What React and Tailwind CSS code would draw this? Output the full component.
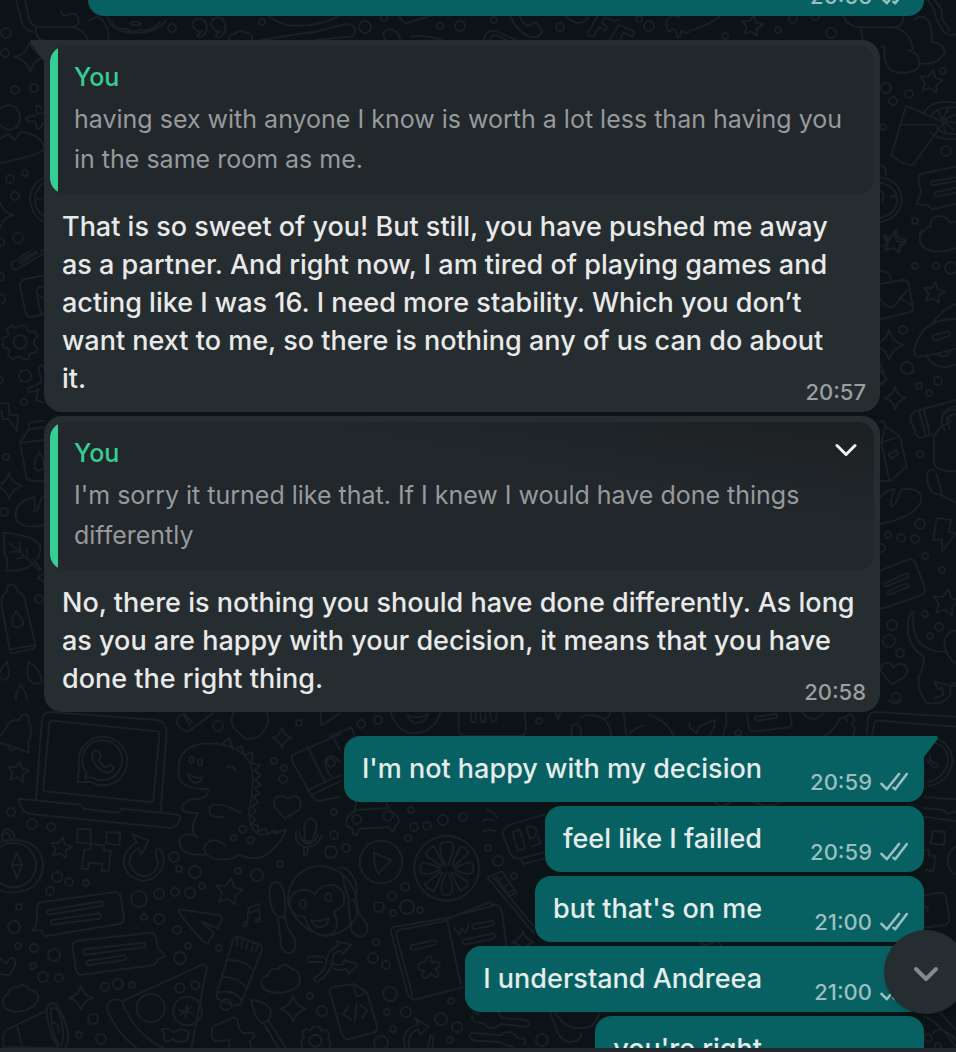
import { clsx } from "clsx";

const FONT = "font-[Inter,'Noto_Sans',sans-serif]";

const INCOMING = [
  {
    id: "in-1",
    quote: "having sex with anyone I know is worth a lot less than having you in the same room as me.",
    text: "That is so sweet of you! But still, you have pushed me away as a partner. And right now, I am tired of playing games and acting like I was 16. I need more stability. Which you don’t want next to me, so there is nothing any of us can do about it.",
    time: "20:57",
    tail: true,
  },
  {
    id: "in-2",
    quote: "I'm sorry it turned like that. If I knew I would have done things differently",
    text: "No, there is nothing you should have done differently. As long as you are happy with your decision, it means that you have done the right thing.",
    time: "20:58",
    menu: true,
  },
];

const OUTGOING = [
  { id: "out-1", text: "I'm not happy with my decision", time: "20:59", tail: true },
  { id: "out-2", text: "feel like I failled", time: "20:59" },
  { id: "out-3", text: "but that's on me", time: "21:00" },
  { id: "out-4", text: "I understand Andreea", time: "21:00" },
  { id: "out-5", text: "you're right", time: "21:00" },
];

// Small circles scattered between the doodles: [x, y, r]
const DOTS = [
  [6, 33, 5], [5, 53, 4], [15, 90, 4], [34, 88, 4], [10, 179, 4], [25, 173, 3], [15, 196, 4], [18, 238, 5],
  [0, 242, 4], [0, 277, 4], [0, 299, 5], [25, 376, 6], [24, 402, 3], [0, 380, 3], [6, 457, 3], [4, 512, 4], [39, 599, 4],
  [172, 28, 4], [262, 22, 3], [365, 27, 6], [384, 18, 3], [440, 26, 3], [460, 26, 5], [494, 20, 3], [560, 27, 4],
  [639, 19, 3], [649, 26, 5], [725, 36, 3], [778, 30, 3], [793, 19, 4], [815, 16, 4], [831, 33, 5],
  [886, 88, 5], [909, 94, 4], [893, 101, 4], [943, 71, 3], [883, 127, 3], [946, 151, 5], [915, 221, 3],
  [915, 266, 3], [936, 266, 3], [951, 268, 6], [903, 330, 4], [907, 368, 6], [938, 381, 4], [919, 386, 3], [929, 393, 3],
  [920, 454, 3], [920, 524, 5], [915, 539, 4], [901, 538, 4], [888, 535, 3], [881, 548, 4], [925, 556, 3], [942, 570, 3],
  [892, 625, 5], [889, 641, 6], [900, 653, 4], [930, 636, 3], [939, 627, 4], [925, 614, 3], [896, 697, 4],
  [11, 812, 4], [32, 824, 5], [51, 827, 4], [57, 877, 5], [69, 882, 4], [86, 883, 3], [50, 891, 4], [19, 907, 3],
  [14, 927, 6], [18, 946, 3], [34, 948, 4], [54, 955, 6], [33, 966, 3], [43, 977, 5], [59, 978, 4], [105, 987, 4],
  [118, 984, 5], [132, 985, 3], [93, 1019, 5], [79, 1035, 3], [101, 1039, 5], [139, 899, 8], [159, 894, 5],
  [175, 892, 4], [190, 893, 5], [202, 886, 3], [144, 917, 3], [159, 919, 5], [177, 930, 4], [188, 946, 3],
  [180, 958, 6], [219, 948, 3], [174, 857, 5], [179, 869, 3], [195, 872, 6], [238, 871, 3], [257, 875, 6],
  [280, 864, 3], [218, 726, 5], [299, 723, 3], [274, 761, 3], [284, 768, 3], [283, 779, 4], [331, 852, 6],
  [334, 835, 4], [334, 812, 3], [361, 724, 4], [378, 720, 4], [411, 810, 3], [414, 827, 4], [427, 826, 4],
  [443, 820, 5], [463, 817, 4], [408, 838, 3], [346, 848, 4], [405, 887, 4], [392, 896, 4], [379, 907, 5],
  [393, 913, 3], [407, 907, 7], [420, 910, 3], [376, 942, 3], [373, 958, 5], [386, 965, 4], [310, 996, 3],
  [322, 1011, 5], [390, 994, 7], [387, 1012, 3], [406, 1012, 5], [451, 1001, 3], [441, 1019, 6], [457, 1027, 5],
  [393, 1029, 3], [450, 1040, 3], [381, 1043, 7], [542, 1040, 6], [498, 861, 5], [488, 848, 3], [514, 876, 3],
  [539, 721, 3], [738, 733, 3], [928, 1038, 4], [938, 1046, 3],
];

const STARS = [
  [752, 26, 11], [931, 82, 12], [894, 242, 12], [934, 293, 11], [946, 603, 14], [18, 772, 11], [61, 848, 11],
  [229, 892, 14],
];

const SPARKLES = [
  [30, 57, 15], [0, 215, 13], [9, 486, 13], [889, 345, 15], [895, 398, 11], [282, 738, 10], [81, 998, 12],
  [293, 1009, 13], [558, 705, 14], [523, 942, 11],
];

// Wallpaper groups: origin x, origin y, and paths drawn at three times their final size
const DOODLES = [
  {
    x: 0,
    y: 0,
    d: [
      "M48 0 L66 70 Q74 88 98 96 M75 0 L88 60 Q96 80 120 80 L215 82 Q245 78 232 48 Q222 34 200 46 Q182 50 184 30 M106 82 Q108 120 132 122 L225 122 M215 82 Q262 92 262 122",
      "M268 62 Q296 40 312 66 Q328 90 326 120",
      "M322 52 Q336 96 400 98 Q470 100 498 62 M336 62 Q350 96 376 84 Q398 104 420 88 Q452 100 480 66 M390 70 Q406 60 424 72 Q406 82 390 70",
      "M606 94 Q582 110 598 112 Q628 102 618 70 Q610 52 588 58 Q568 70 584 88 Q596 98 606 94 M662 94 Q638 110 654 112 Q684 102 674 70 Q664 44 642 56 Q626 68 640 86 Q650 98 662 94",
      "M688 120 Q684 104 704 102 Q716 88 738 98 Q760 100 756 120 M806 48 Q860 94 960 68 M784 120 L960 92",
      "M26 316 Q-4 318 -10 350 Q-6 380 24 390 Q54 392 60 356 Q58 318 26 316",
      "M108 318 L112 342 L132 340 M108 318 Q120 312 124 330 M106 348 Q84 346 78 358 Q86 370 106 362 M108 370 L112 388 Q124 388 128 368",
      "M-4 418 L26 402 L44 420 L62 396 Q126 402 134 448 Q100 470 -4 490",
      "M134 532 Q96 546 90 594 Q92 646 134 668 M134 548 Q108 560 104 598 Q108 636 134 650 M110 596 L124 600",
    ],
  },
  {
    x: 640,
    y: 0,
    d: [
      "M76 72 Q90 36 120 52 M80 72 Q80 96 90 96 Q98 78 108 96 L112 112 Q122 114 124 92 Q142 104 152 92 Q212 74 240 48",
      "M612 50 Q618 76 660 82 L760 82 Q790 80 790 50 M662 84 L668 120 M760 82 Q814 94 818 148 M724 140 L734 140 Q728 200 760 214 Q800 226 834 206 Q850 160 802 150 M822 60 Q842 40 864 60 Q876 74 876 126 Q916 132 914 160 Q890 198 840 190",
      "M862 0 Q884 22 890 60 L912 96 Q930 112 948 102 M884 0 Q912 30 904 52 L930 92",
      "M798 318 L912 366 M780 374 L890 374 M798 318 L754 466 Q786 494 818 496 L912 366",
      "M948 308 Q876 296 852 338 M948 418 Q894 420 870 396 M948 322 Q888 318 872 350 M948 402 Q906 404 890 382 M906 362 L926 324 M908 362 L948 342 M908 362 L948 368 M908 362 L942 390 M908 362 L916 398 M908 362 L894 330",
      "M720 496 Q742 500 738 526 M720 532 Q780 540 786 600 Q780 656 720 666 M720 548 Q770 558 772 602 Q766 646 720 654 M722 574 Q736 578 728 604 M752 590 L766 588",
      "M948 500 L850 520 Q832 524 836 546 L844 576 L830 612 L864 616 L876 628 L948 612 M948 532 L876 544 Q864 554 880 556 L948 544 M948 564 L888 576 Q876 586 892 590 L948 578",
      "M870 750 Q834 744 840 706 Q864 676 870 680 Q872 646 906 648 Q926 656 930 668 L948 664",
      "M736 702 L746 724 L764 694 L770 724 L796 728 L778 746 L782 750 M736 702 L740 730 L728 740",
    ],
  },
  {
    x: 870,
    y: 230,
    d: [
      "M154 0 Q138 40 174 60 Q220 72 258 52",
      "M30 124 Q58 120 64 148 M30 162 L100 150 Q114 150 116 162 L130 238 Q130 244 122 246 L30 268 M30 206 Q58 244 74 226 L112 180 M90 204 L128 228",
      "M184 284 Q214 240 258 222 M258 266 Q176 268 150 316 Q118 376 146 380 Q200 374 258 356 M190 326 Q182 318 196 314 L234 304 Q246 308 236 318 L202 330 Q192 332 190 326 M172 380 Q186 410 226 412 L258 404 M202 370 Q210 382 228 378 Q238 372 238 362",
      "M30 400 L50 448 L36 462 L30 458",
      "M258 510 L136 544 Q116 552 124 576 L136 600 M146 544 L164 600 M160 538 L178 598 M258 528 Q214 536 214 576 L224 600 M258 552 Q234 554 232 576 L240 596",
    ],
  },
  {
    x: 640,
    y: 370,
    d: [
      "M720 0 L740 28 L720 44 M784 0 Q800 20 822 4",
      "M948 90 L826 124 Q808 132 812 152 L828 194 Q836 206 856 200 L880 192 M838 122 L856 196 M852 118 L868 192 M948 118 Q906 120 906 154 M948 132 Q920 134 920 150 M936 154 Q890 170 882 204 L882 280 Q890 304 948 304",
      "M720 156 Q734 146 736 170 L780 198 L800 290 L750 334 L720 332 M724 218 L776 200 M724 218 L748 332 M724 218 L736 170 M746 252 L770 240 L776 252 L752 266 Z",
      "M864 304 Q856 330 870 356 Q876 372 900 374 L948 398 M864 304 Q870 298 882 300 M890 312 L906 372",
      "M720 382 Q740 358 764 358 Q748 400 754 410 Q764 414 784 358 Q848 350 844 392 Q826 442 720 462",
      "M890 444 L934 450 L926 486 L948 490 L906 544 L906 508 L880 510 Z",
      "M720 602 L806 568 Q820 566 826 578 L854 652 Q858 668 844 676 L728 716 L720 714 M734 640 L798 610 Q810 612 804 622 L742 648 Q728 650 734 640 M744 664 L798 640 Q810 644 802 652 L750 674 Q738 674 744 664",
      "M822 726 Q800 730 804 790 Q810 830 852 862 Q850 900 836 920 Q830 960 860 998 Q910 1010 932 972 Q926 940 948 938 M822 726 Q812 780 840 820 Q870 846 916 846 M948 780 Q908 790 914 830 Q926 870 948 880 M884 936 L894 958 L906 950 L910 976 L884 984 M884 936 L948 950",
      "M756 944 L722 904 Q718 880 740 878 Q756 882 760 892 Q778 874 796 886 Q808 904 794 920 Z",
    ],
  },
  {
    x: 0,
    y: 250,
    d: [
      "M132 0 L122 2 M46 60 Q28 52 38 36 L96 0 M46 60 L132 10 M56 34 L108 4 M62 40 L112 8",
      "M132 76 L72 88 Q58 94 60 110 L78 192 Q84 204 100 200 L132 192 M110 118 Q110 152 126 196 M110 118 Q120 106 132 110 M116 136 L132 146",
      "M8 264 L22 260 L26 250 L20 240 L34 226 L46 234 L54 232 L60 226 L78 228 L82 240 L92 246 L106 244 L112 262 L102 272 L102 284 L114 296 L106 308 L94 308 L88 316 L88 326 L70 328 L60 320 L50 322 L38 328 L24 316 L28 302 L22 294 L10 292 Z",
      "M60 256 A20 20 0 1 0 61 256",
      "M132 352 L122 346 L116 352 L124 398 L82 416 L86 426 L108 424 L116 416 L108 450 L132 458",
      "M-4 462 L26 458 L28 494 L54 496 L50 544 L26 508 L8 508 L4 482",
      "M132 512 L92 516 Q84 520 88 536 L60 578 L80 684 Q84 692 96 692 L132 694 M64 578 L132 570 M90 538 L132 532 M118 608 Q100 634 104 654 Q116 668 130 656 Q136 634 118 608",
      "M132 826 Q50 840 46 796 Q48 752 104 742 Q106 780 102 784 Q112 792 124 744 L132 742",
      "M10 848 Q96 854 120 886 Q128 914 96 944 Q66 966 18 962 Q26 930 14 910 Z M30 880 L106 948 L118 962 L124 958 L100 928 M58 876 L62 904 L34 906 M80 900 L82 920 L50 926",
      "M22 1016 Q20 1004 36 1004 Q50 1006 52 1024 Q70 1030 74 1048 L106 1184 Q108 1194 94 1198 L40 1210 Q28 1210 28 1194 L4 1060 Q4 1036 22 1024 Z M28 1198 L104 1186 M48 1084 Q34 1106 38 1126 Q54 1140 70 1122 Q70 1106 48 1084",
      "M22 1236 Q-4 1256 -2 1282 Q14 1300 28 1276 Z M86 1236 Q76 1270 88 1290 Q104 1310 126 1296 Q124 1260 86 1236 M62 1304 Q44 1332 48 1350 M62 1304 Q80 1328 80 1350",
      "M132 970 L112 984 L132 996",
    ],
  },
  {
    x: 0,
    y: 700,
    d: [
      // bell
      "M0 106 Q14 98 22 76 Q30 58 58 60 Q62 42 78 44 Q92 52 86 66 Q98 84 90 112 Q80 136 88 158 L0 128 M24 140 Q32 158 46 146",
      // laptop
      "M108 298 L126 56 Q130 36 152 36 L470 60 Q500 66 500 96 L482 338 M134 274 Q128 272 130 262 L148 70 Q150 62 158 62 L470 94 Q480 96 478 106 L460 298 Q458 308 448 306 Z M56 296 L240 314 Q244 314 250 326 L350 338 Q360 338 364 326 L536 344 Q544 348 540 358 Q530 384 510 384 L90 342 Q62 336 56 296",
      "M238 200 A73 73 0 1 1 272 246 L232 246 Z M250 200 A60 60 0 1 1 276 232 L254 234 L260 220 Z",
      "M286 150 Q300 152 302 172 L296 180 Q304 196 318 202 L330 194 Q340 198 340 208 Q326 224 306 212 Q278 194 276 166 Q278 152 286 150",
      // dinosaur
      "M626 268 Q552 268 538 236 Q524 152 590 134 Q700 118 746 182 Q770 220 748 330 Q744 390 780 404 Q830 400 858 388 Q850 424 806 460 Q760 488 718 464 Q690 484 644 476 Q606 464 614 438 Q636 404 676 436 M626 268 Q624 300 572 298 Q538 314 548 330 Q560 342 596 338 Q574 370 580 398 L592 412 Q554 390 538 420 Q536 470 614 464 M564 220 Q588 238 608 232 Q600 250 584 248 Q566 240 564 220 M682 202 Q694 192 708 212 M722 338 Q650 300 630 320 Q620 356 670 350",
      "M570 180 A6 6 0 1 0 580 180 A6 6 0 1 0 570 180 M595 188 A6 6 0 1 0 605 188 A6 6 0 1 0 595 188 M718 388 A11 11 0 1 0 740 388 A11 11 0 1 0 718 388 M692 414 A8 8 0 1 0 708 414 A8 8 0 1 0 692 414 M742 420 A10 10 0 1 0 762 420 A10 10 0 1 0 742 420",
      "M660 136 L688 114 L698 148 L724 138 L732 166 L758 158 L756 190 L780 196 L764 212 L782 226 L766 238 L782 254 L764 266 L778 280 L760 292 L776 308 L756 318 L768 334 L752 346 L768 360 L752 370 L776 378 L772 396 L796 386 L804 402 L826 390 L832 402",
      // pixel face, arrow and compass
      "M234 386 L272 388 L272 432 L230 426 Z M320 396 L360 398 L358 436 L318 430 Z M272 432 L312 436 L312 450 L332 454 L326 514 L304 512 L308 492 L266 488 L264 508 L246 506 L252 450 L272 448 Z",
      "M398 402 L446 422 L424 464 L416 444 Q388 462 388 488 Q398 524 430 528 Q470 526 474 486 L466 460 Q468 442 484 450 Q498 480 484 510 Q460 544 426 542 Q376 532 370 486 Q374 446 410 428 Z",
      "M-2 571 Q22 580 50 576 Q122 570 130 498 Q124 426 50 420 Q20 418 0 426 M0 442 A67 67 0 1 1 0 548 M50 458 L66 494 L50 536 L36 494 Z M38 494 L66 494 M4 406 Q10 386 26 388 Q44 396 44 418 M18 400 A12 12 0 1 0 19 400",
      // text bubbles
      "M110 628 Q110 610 126 606 L346 576 Q360 576 362 590 L372 654 Q372 668 358 672 L140 708 Q128 708 124 690 L98 692 Q116 670 110 628 M146 630 L306 604 Q316 612 306 618 L146 644 Q136 638 146 630 M156 660 L298 640 Q310 648 298 656 L156 674 Q148 668 156 660",
      "M218 740 Q218 726 232 722 L452 698 Q464 698 468 712 L474 746 L496 768 L472 778 Q472 792 458 796 L244 824 Q230 824 228 810 Z M254 748 L432 728 Q440 736 432 742 L256 764 Q246 756 254 748 M262 782 L374 766 Q384 774 374 780 L264 796 Q254 788 262 782",
      "M0 776 L20 790 Q26 772 40 774 Q52 786 40 806 L28 826 L0 822",
      "M12 920 Q2 890 24 882 Q28 860 52 862 Q70 844 88 870 Q110 870 116 890 Q112 914 88 926 Q34 948 12 920",
      "M140 932 L22 988 Q2 1004 12 1034 M52 982 L68 1044 M8 1040 L176 1044 M140 932 Q140 910 160 910 Q186 920 204 1000 Q206 1030 196 1044 M140 932 Q144 1000 176 1044 M154 926 Q180 910 190 1000 Q188 1050 174 1030 Q150 990 154 926 M160 968 Q180 970 176 1000",
      // cup, ticket, paper plane, notes
      "M532 72 Q528 48 552 40 L576 68 M532 72 Q548 96 566 94 L638 40 M552 46 L570 78 M700 38 Q684 78 716 96 Q744 134 782 104 Q816 70 800 38 M962 36 L964 76 L1020 40",
      "M1020 102 L880 164 Q870 172 880 190 L936 290 Q946 304 960 302 L1020 290 M922 272 L1020 226 M932 286 L1020 244 M922 140 L976 246 M998 110 L1020 150 M976 188 Q976 168 998 168 L1020 186 M994 230 Q974 206 976 188 M992 176 A12 12 0 1 0 993 176",
      "M854 356 L824 320 Q816 298 832 290 Q850 284 862 296 Q880 282 896 294 Q910 312 896 330 Z",
      "M914 400 Q908 366 930 354 Q952 360 950 384 L942 410 Q930 434 914 420 Z M888 394 Q884 434 920 442 Q954 440 964 408 M898 394 Q902 428 924 432 Q946 426 954 404 M912 442 L912 466 L920 466 L924 442",
      "M536 628 L660 646 Q670 650 666 658 L652 686 L604 664 L642 700 L626 726 Q620 732 610 724 Q540 650 536 628",
      "M742 664 L746 624 L776 612 L780 654 M748 640 L776 628 M742 664 Q728 666 730 678 Q744 682 742 664 M780 654 Q764 656 768 666 Q782 668 780 654",
      // tube, pizza, cloud, brush
      "M700 718 Q706 708 718 710 L778 734 Q788 740 786 750 L726 904 Q716 920 700 916 L656 898 Q646 888 652 874 Z M712 716 L710 736 M728 720 L724 744 M744 726 L738 750 M760 732 L754 754 M774 738 L766 756 M688 780 Q730 780 756 806 M670 830 Q716 832 738 862 M656 876 Q704 868 724 900 M676 898 A16 16 0 1 0 680 898",
      "M366 904 L606 794 Q620 792 620 806 L574 1044 M366 904 Q352 892 330 904 Q316 916 324 934 Q350 1000 410 1044 M366 904 Q400 1000 490 1044 M410 924 A42 42 0 1 0 494 924 A42 42 0 1 0 410 924 M562 890 A43 43 0 1 0 563 890 M560 916 L556 950 M536 930 L576 940 M540 946 L572 922 M526 864 A14 14 0 1 0 554 864 A14 14 0 1 0 526 864 M574 856 A12 12 0 1 0 598 856 A12 12 0 1 0 574 856 M484 990 Q506 980 520 998 Q540 982 564 994 Q570 1010 556 1024 Q530 1030 518 1016 Q500 1032 490 1016 Q500 1004 484 990",
      "M790 866 Q772 838 804 826 Q810 802 834 808 Q852 780 876 808 Q896 808 896 830 Q910 850 880 868 Q830 890 790 866",
      "M754 900 Q800 904 812 930 Q816 960 790 970 Q764 960 754 900 M790 970 L836 1044 M806 964 L858 1044 M798 980 L812 1002",
      "M636 994 Q632 982 650 974 L690 958 Q706 946 714 962 Q714 988 730 1000 L760 998 Q770 1008 750 1022 Q750 1030 754 1044 M636 994 Q632 1018 650 1024 L684 1020 Q692 1030 688 1044",
      "M902 1024 L912 1014 L906 996 L920 986 L932 992 L938 980 L958 980 L964 992 L978 990 L990 1004 L984 1016 L992 1026 L988 1044 M902 1024 L908 1044 M946 1004 A18 18 0 1 0 947 1004",
    ],
  },
  {
    x: 190,
    y: 700,
    d: [
      // monkey
      "M294 610 Q290 540 350 506 Q420 480 476 542 Q510 590 500 650 Q470 700 410 708 Q330 696 294 610 M298 610 Q306 566 346 570 Q366 572 374 584 Q398 546 440 558 Q472 580 460 616 Q444 630 432 636 Q456 690 416 706 Q360 712 344 650 Q304 650 298 610 M364 660 Q386 670 416 654 Q416 680 388 682 Q366 678 364 660 M330 612 A9 13 0 1 0 348 612 A9 13 0 1 0 330 612 M406 592 A9 13 0 1 0 424 592 A9 13 0 1 0 406 592",
      "M264 652 Q232 620 240 560 Q254 532 276 560 Q290 600 284 650 Z M264 654 L274 740 Q282 764 304 758 Q324 744 314 716 Q292 690 284 650 M446 504 Q470 492 494 540 Q510 580 490 602 M456 516 Q466 580 482 606 M474 606 L484 690 Q496 714 520 708 Q540 694 530 672 Q504 640 490 598",
      // crossing arrows
      "M352 776 Q354 766 400 770 L406 776 M354 786 L396 786 M372 836 Q410 810 410 778 Q414 748 444 738 L440 724 L484 734 L458 762 L450 752 Q426 760 428 780 Q424 820 384 844 Q372 846 372 836 M430 790 Q440 800 462 790 L462 780 L504 794 L476 822 L470 808 Q440 814 430 804",
      // code file
      "M420 878 Q414 866 434 860 L490 852 L530 876 L562 980 Q564 992 552 998 L474 1018 Q462 1018 456 1004 Z M490 852 L498 884 Q500 890 510 888 L530 876 M476 922 L458 942 L484 960 M500 910 L494 966 M512 916 L532 932 L516 954",
      // car
      "M470 378 Q464 348 492 336 L500 304 M492 330 L592 324 M588 304 L600 332 Q630 346 626 368 L616 378 L612 394 Q604 396 598 382 L508 386 L500 406 L490 404 L488 386 L470 378 M486 358 A14 14 0 1 0 514 358 A14 14 0 1 0 486 358 M580 348 A14 14 0 1 0 608 348 A14 14 0 1 0 580 348",
      // play and citrus
      "M572 422 A64 64 0 1 0 574 422 M552 458 L604 480 L566 520 Q550 500 552 458",
      "M769 408 A97 97 0 1 0 771 408",
      "M766 496 Q738 434 760 426 L784 426 Q800 440 774 496 M786 496 L810 440 Q826 438 836 458 L790 500 M796 504 Q840 480 850 492 L850 514 Q840 530 796 510 M790 516 L836 548 Q828 570 810 572 L784 518 M776 520 Q798 576 776 586 L762 584 Q744 570 768 520 M758 518 L732 574 Q710 566 704 552 L752 516 M750 510 Q704 530 692 516 L692 494 Q706 482 750 504 M754 498 L708 466 Q710 446 732 440 L760 494",
      // open book
      "M770 654 L608 682 Q600 684 604 700 L652 880 Q660 900 680 898 L818 862 M770 654 L812 852 M770 658 L900 606 L904 614 Q930 610 936 636 L950 738 M770 654 L914 616 M770 662 L626 690 Q616 696 620 710 L668 888 M664 736 L734 720 Q744 728 734 734 L670 750 Q658 744 664 736 M794 684 L808 704 L814 684 L828 698 L836 672 M848 674 L908 662 Q918 670 908 676 L852 688 Q844 680 848 674 M820 720 L910 700 Q922 708 910 716 L824 734 Q812 728 820 720",
      "M706 786 Q708 766 720 770 Q728 776 724 788 Q746 782 750 794 Q746 806 736 806 Q750 822 742 830 Q730 832 722 820 Q710 840 698 832 Q694 822 702 812 Q680 812 684 796 Q692 784 706 786",
      // clock, brush and rays
      "M1062 344 L960 374 Q936 384 940 408 L962 464 Q974 480 996 474 L1062 458 M992 476 L1000 492 L1062 476 M968 396 L988 388 L998 414 M968 396 L974 420 M976 430 L984 452 L1006 446 L1000 424 M1010 382 Q1036 374 1040 394 Q1036 418 1018 414 L1010 382 M1044 410 L1052 430 L1026 440 M890 328 L910 338 L924 354 M878 366 Q880 354 912 362 M878 396 Q890 386 918 392",
      "M892 532 L936 514 L980 578 L958 588 L920 532 M892 532 L1032 700 M908 530 L1032 680 M936 534 L926 540 M954 552 L944 560 M970 572 L958 576",
      // refresh, wrench
      "M646 1044 Q630 988 684 974 L676 956 L716 980 L690 1004 L684 988 Q650 1000 658 1044 M714 1044 L722 1006 L730 1012 L728 1044 M636 688",
      "M848 948 Q842 958 856 966 L882 970 Q896 990 916 982 L932 972 L1004 980 Q1018 980 1018 970 Q1016 960 1002 960 L936 954 L924 936 M850 936 L870 944 M840 1006 Q840 1020 856 1022 L932 1026 Q950 1040 972 1040 M844 998 L932 1006 Q950 990 970 1000 L982 1014 L1000 1016 Q1012 1024 1002 1034",
      "M1080 938 L1104 1000 Q1120 1028 1146 1026 Q1176 1020 1174 1000 M1096 938 Q1130 1000 1200 980 Q1220 970 1228 940",
      // strip below the second message
      "M602 36 Q620 96 672 100 Q734 96 752 36 M654 46 Q680 60 716 42 Q702 72 676 68 Q656 62 654 46 M806 36 L806 94 Q808 108 826 108 L996 108 Q1008 104 1008 86 L1004 36 M842 36 L844 66 L856 66 L858 40 M872 40 L874 66 L886 66 L886 40 M900 36 L904 64 L918 64 L920 40 M420 108 L484 82 L494 108",
      "M1172 52 Q1200 36 1240 56 Q1264 76 1264 108 M1146 108 Q1140 70 1160 72 Q1176 80 1174 108 M1240 56 Q1264 50 1260 36 M1300 36 L1310 108 M1320 100 Q1340 80 1360 78",
    ],
  },
  {
    x: 640,
    y: 700,
    d: [
      "M24 44 Q80 60 100 106 M148 70 L150 84 L170 100 L176 80 L212 64 L226 60 L222 80 L210 106 M258 40 Q264 70 250 104 M320 40 L328 86 Q332 98 344 94 L448 82 Q458 76 454 62 L450 40 M346 50 L408 42 Q416 50 408 54 L350 62 Q342 56 346 50 M484 36 Q520 76 550 40 M556 106 Q590 84 596 60 Q614 44 622 62 M618 50 Q626 38 640 50 Q646 64 634 72 Q650 80 640 106 M744 0 Q770 20 784 0",
      "M680 106 L684 54 Q690 34 712 36 L948 50 M696 106 L704 68 Q706 60 718 62 L948 80 M880 114 Q930 124 938 180 Q930 250 862 258 M884 128 Q924 140 924 184 Q914 236 862 246 M862 180 Q880 214 894 198 Q890 184 880 190 Q866 178 870 166 M852 292 L948 298 M852 324 L912 330 L922 342 L948 334 M852 350 L948 364",
      "M878 392 L916 396 L912 436 L872 430 Z M852 450 L866 448 L866 466 L886 468 L880 514 L856 510 M948 440 Q914 460 926 500 Q936 520 948 524 M852 586 L902 578 Q916 578 918 592 L928 654 Q930 670 916 674 L852 684 M852 620 L864 622 L862 634 M880 1000 Q900 970 948 1020 M852 950 Q890 960 948 1040 M900 938 L948 990",
      "M226 306 Q240 330 270 306 M340 306 Q390 326 420 306 M180 726 Q196 744 220 726 M236 726 L244 740",
    ],
  },
  {
    x: 310,
    y: 0,
    d: [
      "M0 76 Q60 66 84 48 M0 100 L108 72 Q136 74 136 92 Q134 108 118 110 L20 120 M226 120 Q212 96 234 88 Q268 90 270 120 M268 48 Q280 76 300 66 L362 48 M304 110 Q350 104 394 120 M522 120 Q524 92 552 92 L620 120 M540 120 Q546 104 560 106 L590 120",
      "M600 48 Q630 110 674 112 Q702 104 694 88 L676 66 L654 78 Q634 68 630 48 M766 48 Q812 88 834 52 M862 48 L834 98 Q832 108 850 110 L868 82 L886 92 Q896 82 884 74 L874 68 L886 52 L910 62 L928 60 M900 120 L926 74 L970 92 Q978 104 966 108 L940 98 L932 116",
    ],
  },
];

function star(x, y, r) {
  const points = [];
  for (let i = 0; i < 10; i++) {
    const radius = i % 2 ? r * 0.5 : r;
    const angle = (i * Math.PI) / 5 - 1.4;
    points.push(`${(x + radius * Math.cos(angle)).toFixed(1)},${(y + radius * Math.sin(angle)).toFixed(1)}`);
  }
  return points.join(" ");
}

function sparkle(x, y, r) {
  const k = r * 0.2;
  return `M${x} ${y - r} Q${x + k} ${y - k} ${x + r} ${y} Q${x + k} ${y + k} ${x} ${y + r} Q${x - k} ${y + k} ${x - r} ${y} Q${x - k} ${y - k} ${x} ${y - r}Z`;
}

function Wallpaper() {
  return (
    <svg
      aria-hidden="true"
      viewBox="0 0 956 1052"
      preserveAspectRatio="xMinYMin slice"
      className="absolute inset-0 h-full w-full"
      fill="none"
      stroke="#182023"
      strokeLinecap="round"
      strokeLinejoin="round"
    >
      <g strokeWidth="2">
        {DOTS.map(([x, y, r]) => <circle key={`${x}-${y}`} cx={x} cy={y} r={r} />)}
        {STARS.map(([x, y, r]) => <polygon key={`${x}-${y}`} points={star(x, y, r)} />)}
        {SPARKLES.map(([x, y, r]) => <path key={`${x}-${y}`} d={sparkle(x, y, r)} />)}
      </g>
      {DOODLES.map((group) => (
        <g key={`${group.x}-${group.y}`} transform={`translate(${group.x} ${group.y}) scale(0.3333)`} strokeWidth="6">
          {group.d.map((d) => <path key={d} d={d} />)}
        </g>
      ))}
    </svg>
  );
}

function Tail({ side }) {
  return (
    <svg
      aria-hidden="true"
      viewBox="0 0 15 22"
      className={clsx(
        "absolute top-0 h-[22px] w-[15px]",
        side === "left" ? "-left-[14px] text-[#262d30]" : "-right-[14px] -scale-x-100 text-[#076162]"
      )}
      fill="currentColor"
    >
      <path d="M15 0 H2 Q-1 0 1 4 L14 21 H15 Z" />
    </svg>
  );
}

function DoubleCheck() {
  return (
    <svg
      aria-hidden="true"
      viewBox="0 0 28 20"
      className="h-5 w-7"
      fill="none"
      stroke="currentColor"
      strokeWidth="2.6"
      strokeLinecap="round"
      strokeLinejoin="round"
    >
      <path d="M1.5 11.8 L6.8 17.2 L19 2" />
      <path d="M13.4 15.8 L15.2 17.2 L26.8 2" />
    </svg>
  );
}

function Meta({ time, sent, className }) {
  return (
    <span className={clsx("flex items-center justify-end gap-2 text-[22px] leading-6 font-medium", className)}>
      <time>{time}</time>
      {sent && <DoubleCheck />}
    </span>
  );
}

// The last word carries an empty inline box so that it never runs under the time
function MessageText({ text }) {
  const cut = text.lastIndexOf(" ") + 1;
  return (
    <p className="col-start-1 row-start-1 py-[14px] pr-4 pl-3 text-[27px] leading-[38px] font-medium">
      {text.slice(0, cut)}
      <span className="whitespace-nowrap">
        {text.slice(cut)}
        <span className="inline-block w-16" />
      </span>
    </p>
  );
}

function IncomingMessage({ quote, text, time, tail, menu }) {
  return (
    <article
      className={clsx(
        "relative mr-[76px] ml-11 rounded-[18px] bg-[#262d30] p-1.5 pb-0 text-[#e9e9e9]",
        tail && "rounded-tl-none"
      )}
    >
      {tail && <Tail side="left" />}
      <blockquote
        className={clsx(
          "relative flex overflow-hidden rounded-2xl",
          menu ? "bg-linear-to-bl from-[#1c2023] to-[#22272b] to-35%" : "bg-[#22272b]"
        )}
      >
        <div className="w-2 shrink-0 bg-[#35cf96]" />
        <div className="pt-3 pr-6 pb-[15px] pl-4">
          <p className="mb-[3px] text-[25px] leading-[38px] font-medium text-[#35cf96]">You</p>
          <p className="text-[25px] leading-10 text-[#969a9c]">{quote}</p>
        </div>
        {menu && (
          <button aria-label="Message menu" className="absolute top-3 right-3 flex h-8 w-8 items-center justify-center">
            <svg
              viewBox="0 0 22 14"
              className="h-[14px] w-[22px]"
              fill="none"
              stroke="#f4f4f4"
              strokeWidth="3"
              strokeLinecap="round"
              strokeLinejoin="round"
            >
              <path d="M2 2.5 L11 11.5 L20 2.5" />
            </svg>
          </button>
        )}
      </blockquote>
      <div className="grid">
        <MessageText text={text} />
        <Meta time={time} className="col-start-1 row-start-1 self-end justify-self-end pr-2 pb-2 text-[#9b9fa1]" />
      </div>
    </article>
  );
}

function OutgoingMessage({ text, time, tail, className }) {
  return (
    <article
      className={clsx(
        "relative mr-8 flex h-[66px] shrink-0 items-end self-end rounded-2xl bg-[#076162] pr-4 pl-[18px] text-[#e4ecec]",
        tail && "rounded-tr-none",
        className
      )}
    >
      {tail && <Tail side="right" />}
      {text && <p className="pb-[14px] text-[27px] leading-[38px] font-medium">{text}</p>}
      <Meta sent time={time} className="ml-auto w-[146px] pb-2 text-[#9bbfbf]" />
    </article>
  );
}

export default function App() {
  return (
    <div className={clsx("relative flex h-screen flex-col overflow-hidden bg-[#0b1316]", FONT)}>
      <Wallpaper />

      <main className="relative flex min-h-0 flex-1 flex-col overflow-hidden">
        <section className="-mt-[50px] flex flex-col gap-6">
          <OutgoingMessage time="20:56" className="ml-[88px] self-stretch" />

          <div className="flex flex-col gap-1">
            {INCOMING.map((message) => <IncomingMessage key={message.id} {...message} />)}
          </div>

          <div className="flex flex-col gap-1">
            {OUTGOING.map((message) => <OutgoingMessage key={message.id} {...message} />)}
          </div>
        </section>

        <button
          aria-label="Scroll to latest"
          className="absolute -right-3 bottom-[34px] flex h-[84px] w-[84px] items-center justify-center rounded-full bg-[#262d30] shadow-md"
        >
          <svg
            viewBox="0 0 24 16"
            className="mt-1 h-4 w-6"
            fill="none"
            stroke="#85898b"
            strokeWidth="4"
            strokeLinecap="round"
            strokeLinejoin="round"
          >
            <path d="M2 3 L12 13 L22 3" />
          </svg>
        </button>
      </main>

      <footer className="relative h-1 shrink-0 bg-[#22272b]" />
    </div>
  );
}
